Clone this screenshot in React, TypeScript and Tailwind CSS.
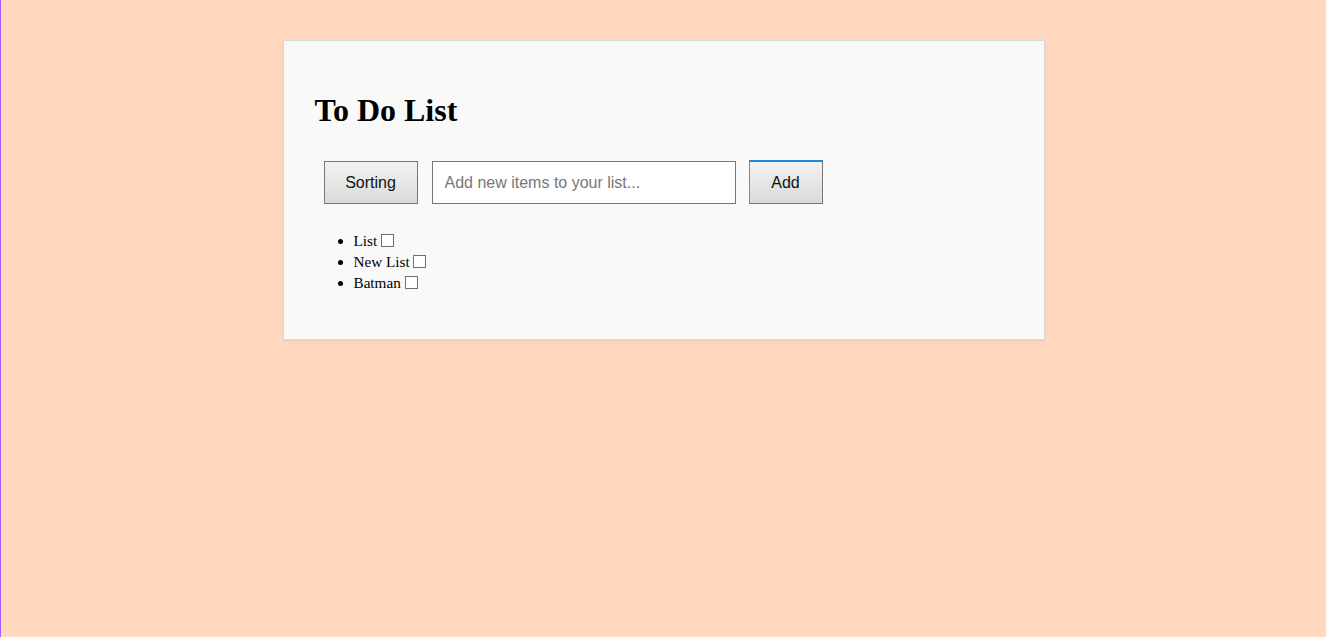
export default function App() {
  const items = ["List", "New List", "Batman"];
  return (
    <div className="min-h-[637px] w-full bg-[#ffd8bf] border-l border-[#9d63ff] pt-[40px]">
      <div className="mx-auto w-[762px] border border-[#dadada] bg-[#f9f9f9] py-[30px] pl-[31px] pr-[29px] shadow-[0_1px_3px_rgba(0,0,0,0.08)]">
        <h1 className="mt-[21px] mb-[21px] text-[32px] font-bold leading-[37px] text-black [font-family:'Liberation_Serif',serif]">
          To Do List
        </h1>
        <div className="flex items-end [font-family:'Liberation_Sans',Arial,sans-serif] text-[16px] mt-[31px]">
          <button className="ml-[9px] h-[43px] w-[94px] border border-[#777] bg-gradient-to-b from-[#f2f2f2] to-[#dadada] text-[#111]">
            Sorting
          </button>
          <input
            className="ml-[14px] h-[43px] w-[304px] border border-[#767676] bg-white px-[12px] text-[16px] placeholder:text-[#777] outline-none"
            placeholder="Add new items to your list..."
          />
          <button className="ml-[13px] h-[44px] w-[74px] border-solid border-t-[2px] border-r border-b border-l border-t-[#1e88d8] border-r-[#777] border-b-[#777] border-l-[#6f8aa3] bg-gradient-to-b from-[#f2f2f2] to-[#dadada] pt-[1px] text-[#111]">
            Add
          </button>
        </div>
        <ul className="mt-[26px] mb-[16px] list-disc pl-[39px] text-[15.2px] leading-[21px] text-black [font-family:'Liberation_Serif',serif]">
          {items.map((it) => (
            <li key={it}>
              {it}{" "}
              <span className="inline-block h-[13px] w-[13px] border border-[#707070] bg-white align-[-1px]" />
            </li>
          ))}
        </ul>
      </div>
    </div>
  );
}
